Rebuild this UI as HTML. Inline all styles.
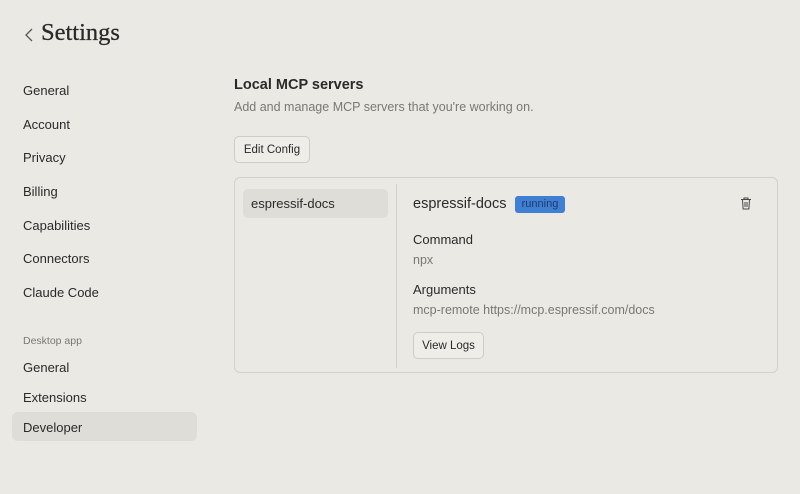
<!DOCTYPE html>
<html><head><style>
body{margin:0;width:800px;height:494px;background:#ebe9e4;font-family:"Liberation Sans",sans-serif;color:#2b2a27;position:relative;overflow:hidden}
.a{position:absolute;white-space:nowrap}
.nav{font-size:13px;color:#2b2a27;left:23px}
.t{font-size:13px;color:#2b2a27}
.g{font-size:12.5px;color:#7a7873}
.btn{position:absolute;border:1px solid #cfccc5;border-radius:5px;background:#eeede8;font-size:11.5px;color:#2b2a27;display:flex;align-items:center;justify-content:center}
</style></head><body>
<svg class="a" style="left:24px;top:28px" width="10" height="14" viewBox="0 0 10 14"><path d="M8 1L2 7l6 6" fill="none" stroke="#5a5853" stroke-width="1.3"/></svg>
<div class="a" style="left:41px;top:19px;font-family:'Liberation Serif',serif;font-size:24.5px;color:#2b2a27;-webkit-text-stroke:0.3px #2b2a27">Settings</div>
<div class="a nav" style="top:83px">General</div>
<div class="a nav" style="top:117px">Account</div>
<div class="a nav" style="top:150px">Privacy</div>
<div class="a nav" style="top:184px">Billing</div>
<div class="a nav" style="top:218px">Capabilities</div>
<div class="a nav" style="top:251px">Connectors</div>
<div class="a nav" style="top:285px">Claude Code</div>
<div class="a" style="left:23px;top:335px;font-size:10.5px;color:#7a7873">Desktop app</div>
<div class="a nav" style="top:360px">General</div>
<div class="a nav" style="top:390px">Extensions</div>
<div class="a" style="left:12px;top:412px;width:185px;height:29px;background:#dfddd7;border-radius:6px"></div>
<div class="a nav" style="top:420px">Developer</div>

<div class="a" style="left:234px;top:77px;font-size:14.5px;font-weight:bold">Local MCP servers</div>
<div class="a g" style="left:234px;top:100px">Add and manage MCP servers that you're working on.</div>
<div class="btn" style="left:234px;top:136px;width:74px;height:25px">Edit Config</div>
<div class="a" style="left:234px;top:177px;width:542px;height:194px;border:1px solid #d4d1ca;border-radius:6px"></div>
<div class="a" style="left:243px;top:189px;width:145px;height:29px;background:#dfddd7;border-radius:5px"></div>
<div class="a t" style="left:251px;top:196px">espressif-docs</div>
<div class="a" style="left:396px;top:184px;width:1px;height:184px;background:#d4d1ca"></div>
<div class="a" style="left:413px;top:196px;font-size:14.5px">espressif-docs</div>
<div class="a" style="left:515px;top:196px;width:50px;height:17px;background:#3f7fd4;border-radius:3px;font-size:11px;color:#1f3a66;text-align:center;line-height:17px">running</div>
<svg class="a" style="left:740px;top:197px" width="12" height="13" viewBox="0 0 12 13"><path d="M1 2.5h10M4 2.5V1h4v1.5M2.5 2.5l.6 9.5h5.8l.6-9.5M5 5v5M7 5v5" fill="none" stroke="#4a4844" stroke-width="1"/></svg>
<div class="a t" style="left:413px;top:232px">Command</div>
<div class="a g" style="left:413px;top:253px">npx</div>
<div class="a t" style="left:413px;top:282px">Arguments</div>
<div class="a g" style="left:413px;top:303px">mcp-remote https://mcp.espressif.com/docs</div>
<div class="btn" style="left:413px;top:332px;width:69px;height:25px">View Logs</div>
</body></html>
